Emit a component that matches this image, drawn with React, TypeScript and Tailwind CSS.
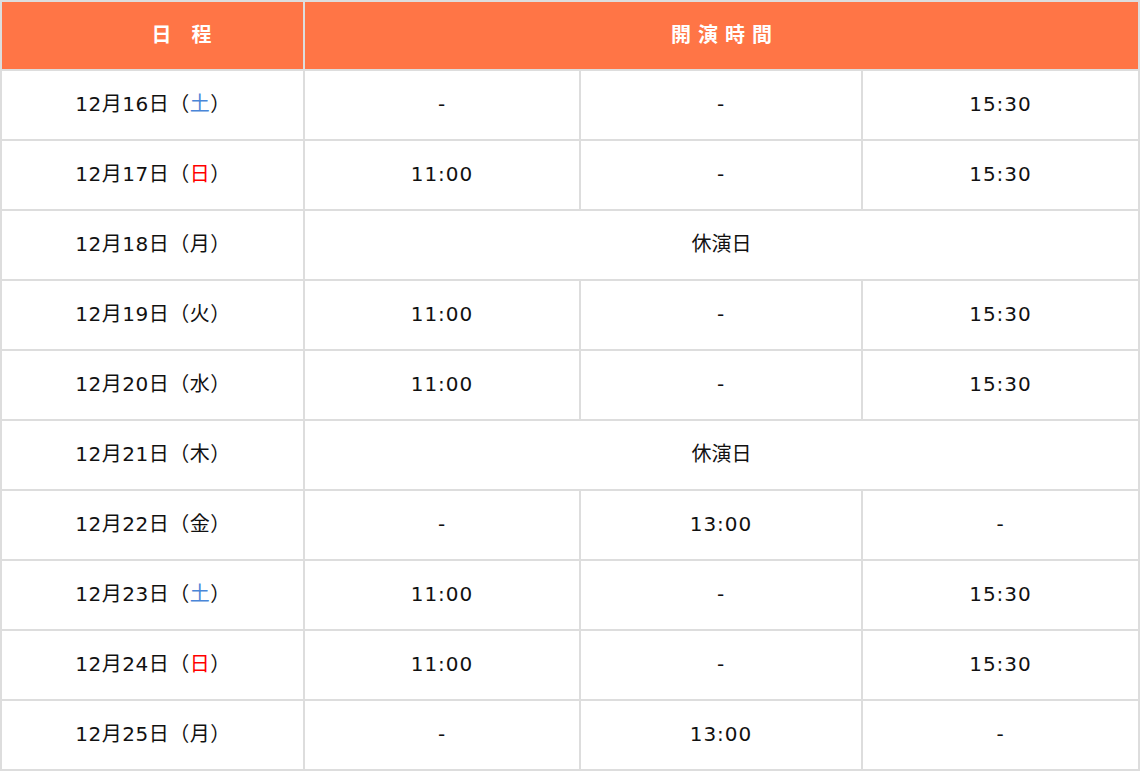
import React from "react";

type Row = { date: string; day: string; dayColor?: string; cells: string[] | null };

const rows: Row[] = [
  { date: "12月16日", day: "土", dayColor: "text-[#4a86d8]", cells: ["-", "-", "15:30"] },
  { date: "12月17日", day: "日", dayColor: "text-[#ff0000]", cells: ["11:00", "-", "15:30"] },
  { date: "12月18日", day: "月", cells: null },
  { date: "12月19日", day: "火", cells: ["11:00", "-", "15:30"] },
  { date: "12月20日", day: "水", cells: ["11:00", "-", "15:30"] },
  { date: "12月21日", day: "木", cells: null },
  { date: "12月22日", day: "金", cells: ["-", "13:00", "-"] },
  { date: "12月23日", day: "土", dayColor: "text-[#4a86d8]", cells: ["11:00", "-", "15:30"] },
  { date: "12月24日", day: "日", dayColor: "text-[#ff0000]", cells: ["11:00", "-", "15:30"] },
  { date: "12月25日", day: "月", cells: ["-", "13:00", "-"] },
];

const cell = "bg-white flex items-center justify-center";

export default function App() {
  return (
    <div
      className="w-[1140px] bg-[#dddddd] p-[2px] grid grid-cols-[301px_274px_280px_275px] grid-rows-[67px_repeat(10,68px)] gap-[2px] text-[20px] text-[#111]"
      style={{ fontFamily: '"DejaVu Sans", "Noto Sans CJK JP", sans-serif' }}
    >
      <div className="bg-[#ff7546] flex items-center justify-center pl-[58px] pb-[2px] text-white font-bold text-[20px]">
        <span>日</span>
        <span className="ml-[20px]">程</span>
      </div>
      <div className="col-span-3 bg-[#ff7546] flex items-center justify-center pb-[2px] text-white font-bold text-[20px] tracking-[7px] pl-[7px]">
        開演時間
      </div>
      {rows.map((r) => (
        <React.Fragment key={r.date}>
          <div className={`${cell} pb-[2px]`}>
            <span className="tracking-[0.5px] pl-[1px]">
              {r.date}（<span className={r.dayColor ?? ""}>{r.day}</span>）
            </span>
          </div>
          {r.cells ? (
            r.cells.map((c, i) => (
              <div key={i} className={`${cell} pb-[2px] tracking-[1px]`}>
                {c}
              </div>
            ))
          ) : (
            <div className={`${cell} pb-[2px] col-span-3`}>休演日</div>
          )}
        </React.Fragment>
      ))}
    </div>
  );
}
